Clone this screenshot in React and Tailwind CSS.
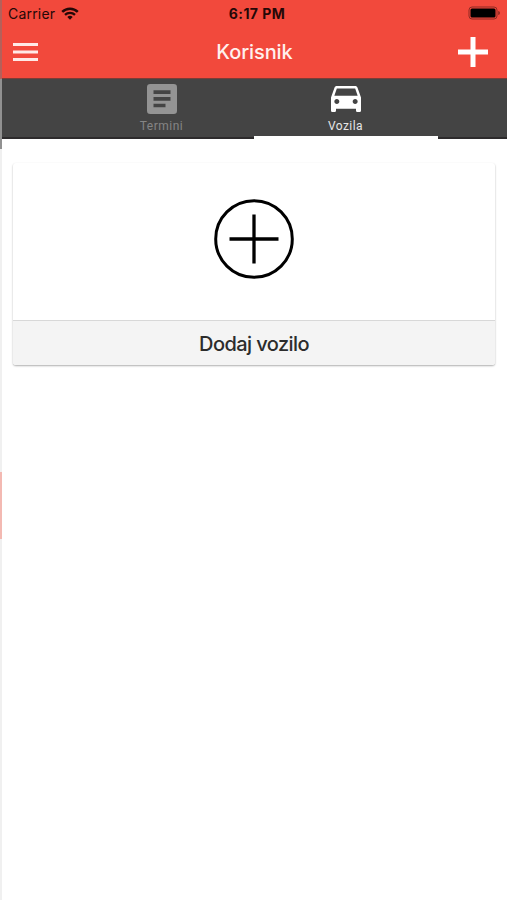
import React from "react";

const StatusBar = () => {
  return (
    <div className="grid grid-cols-3 items-center h-[27px] pl-[6px] pr-[6px] text-[#250807]">
      <div className="flex items-center gap-[6px]">
        <span className="text-[14px] leading-none tracking-[0.2px]">Carrier</span>
        <svg className="-mt-px" width="18" height="13" viewBox="0 0 18 13" fill="none" stroke="currentColor">
          <path d="M1.2 4.8a11.2 11.2 0 0 1 15.6 0" strokeWidth="2.5" />
          <path d="M4 7.8a7.2 7.2 0 0 1 10 0" strokeWidth="2.3" />
          <path d="M6.3 10a4 4 0 0 1 5.4 0L9 12.8z" fill="currentColor" stroke="none" />
        </svg>
      </div>
      <span className="text-center text-[14px] leading-none font-bold tracking-[0.45px] whitespace-nowrap pt-px pl-[5px]">
        6:17 PM
      </span>
      <svg className="justify-self-end -mt-px" width="33" height="14" viewBox="0 0 33 14">
        <rect x="1" y="1" width="28" height="12" rx="3" fill="none" stroke="#8f2b23" strokeWidth="1" />
        <rect x="2.5" y="2.5" width="25" height="9" rx="1.5" fill="#000" />
        <path d="M30.2 5v4c1.2-.4 1.8-1.2 1.8-2s-.6-1.600-1.800-2z" fill="#8f2b23" />
      </svg>
    </div>
  );
};

const NavBar = () => {
  return (
    <div className="grid grid-cols-3 items-center h-[51px] pl-[11px] pr-[19px]">
      <button aria-label="Menu">
        <svg width="25" height="19" viewBox="0 0 25 19" fill="#ffe9e6">
          <rect width="25" height="3" />
          <rect y="7.5" width="25" height="3" />
          <rect y="15" width="25" height="3" />
        </svg>
      </button>
      <h1 className="text-center text-[20px] leading-none font-medium tracking-[-0.1px] text-[#fff0ed] -mt-px pl-[8px]">
        Korisnik
      </h1>
      <button className="justify-self-end -mt-px" aria-label="Dodaj">
        <svg width="30" height="30" viewBox="0 0 30 30" fill="#fff">
          <rect x="12.500" width="5" height="30" />
          <rect y="12.500" width="30" height="5" />
        </svg>
      </button>
    </div>
  );
};

const Tabs = () => {
  return (
    <div className="flex justify-center h-[61px] pr-[2px] bg-[#444444] border-t border-t-[#7c3c36] border-b-2 border-b-[#2d2b2c] font-['Roboto',sans-serif]">
      <div className="flex flex-col items-center w-[184px] pt-[5px] text-[#949494]">
        <svg width="30" height="30" viewBox="0 0 30 30">
          <rect width="30" height="30" rx="3.300" fill="currentColor" />
          <path d="M6.500 8.200h17M6.500 14.800h17M6.500 21.500h12" stroke="#444444" strokeWidth="3.700" />
        </svg>
        <span className="mt-[5px] text-[12px] leading-[14px] tracking-[0.5px] text-[#858585]">
          Termini
        </span>
      </div>
      {/* Active tab, the indicator runs over the bar's bottom border */}
      <div className="flex flex-col items-center w-[184px] h-[60px] pt-[5px] border-b-[3px] border-white text-white">
        <svg className="mt-[2px]" width="30" height="26" viewBox="3 5 18 16" preserveAspectRatio="none">
          <path
            fill="currentColor"
            d="M18.920 6.010C18.720 5.420 18.160 5 17.500 5h-11c-.66 0-1.210.42-1.420 1.010L3 12v8c0 .55.45 1 1 1h1c.55 0 1-.45 1-1v-1h12v1c0 .55.45 1 1 1h1c.55 0 1-.45 1-1v-8l-2.080-5.990zM6.500 16c-.83 0-1.500-.67-1.500-1.500S5.670 13 6.500 13s1.500.67 1.500 1.500S7.330 16 6.500 16zm11 0c-.83 0-1.500-.67-1.500-1.500s.67-1.500 1.500-1.500 1.500.67 1.500 1.500-.67 1.500-1.500 1.500zM5 11l1.500-4.500h11L19 11H5z"
          />
        </svg>
        <span className="mt-[7px] text-[12px] leading-[14px] tracking-[0.4px] text-[#e6e6e6]">
          Vozila
        </span>
      </div>
    </div>
  );
};

const AddVehicleCard = () => {
  return (
    <div className="ml-[11px] mr-[12px] mt-[24px] rounded-[3px] overflow-hidden bg-white shadow-[0_1px_2px_rgba(0,0,0,0.32)]">
      <div className="flex justify-center h-[157px] pt-[36px]">
        <svg width="80" height="80" viewBox="0 0 80 80" fill="none" stroke="#000">
          <circle cx="40" cy="40" r="38.300" strokeWidth="3" />
          <path d="M40 15.500v49M15.500 40h49" strokeWidth="3.300" />
        </svg>
      </div>
      <div className="flex items-center justify-center h-[45px] border-t border-[#d8d8d8] bg-[#f4f4f4]">
        <span className="text-[20px] leading-none font-medium tracking-[-0.58px] text-[#2c2c2c] pt-px">
          Dodaj vozilo
        </span>
      </div>
    </div>
  );
};

const App = () => {
  return (
    <div className="flex w-[507px] h-[900px] overflow-hidden bg-white font-['Inter',sans-serif]">
      {/* Edge of the screen lying underneath */}
      <div className="flex flex-col w-[2px] shrink-0">
        <div className="h-[79px] bg-[#b5605a]" />
        <div className="h-[70px] bg-[#919191]" />
        <div className="h-[323px] bg-[#f0f0f0]" />
        <div className="h-[67px] bg-[#f3b9b2]" />
        <div className="flex-1 bg-[#f0f0f0]" />
      </div>

      <div className="flex-1">
        <header className="bg-[#f2493c]">
          <StatusBar />
          <NavBar />
        </header>
        <Tabs />
        <AddVehicleCard />
      </div>
    </div>
  );
};

export default App;
